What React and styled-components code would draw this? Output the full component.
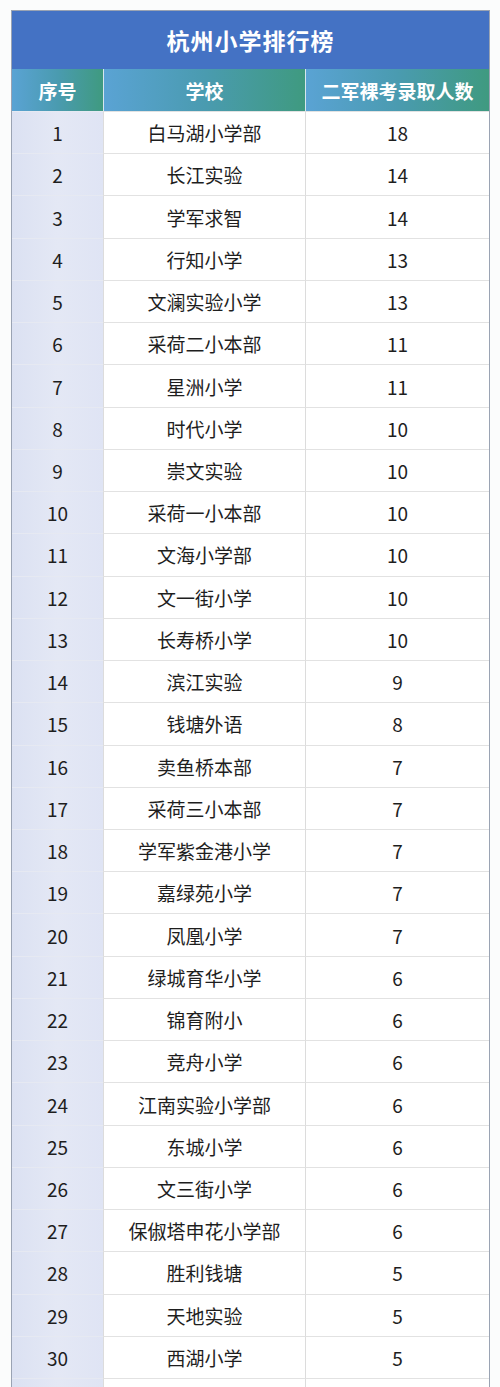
import React from 'react'
import styled, { createGlobalStyle } from 'styled-components'

const rows = [
  ['白马湖小学部', 18],
  ['长江实验', 14],
  ['学军求智', 14],
  ['行知小学', 13],
  ['文澜实验小学', 13],
  ['采荷二小本部', 11],
  ['星洲小学', 11],
  ['时代小学', 10],
  ['崇文实验', 10],
  ['采荷一小本部', 10],
  ['文海小学部', 10],
  ['文一街小学', 10],
  ['长寿桥小学', 10],
  ['滨江实验', 9],
  ['钱塘外语', 8],
  ['卖鱼桥本部', 7],
  ['采荷三小本部', 7],
  ['学军紫金港小学', 7],
  ['嘉绿苑小学', 7],
  ['凤凰小学', 7],
  ['绿城育华小学', 6],
  ['锦育附小', 6],
  ['竞舟小学', 6],
  ['江南实验小学部', 6],
  ['东城小学', 6],
  ['文三街小学', 6],
  ['保俶塔申花小学部', 6],
  ['胜利钱塘', 5],
  ['天地实验', 5],
  ['西湖小学', 5],
]

const GlobalStyle = createGlobalStyle`
  html, body {
    margin: 0;
    padding: 0;
    background: #fbfcfc;
  }
  body {
    font-family: "Noto Sans CJK SC", "Noto Sans", sans-serif;
    color: #222;
  }
`

export default function App() {
  return (
    <Page>
      <GlobalStyle />
      <Table>
        <Title>杭州小学排行榜</Title>
        <Grid>
          <HeadCell>序号</HeadCell>
          <HeadCell>学校</HeadCell>
          <HeadCell>二军裸考录取人数</HeadCell>
          {rows.map(([name, count], i) => (
            <React.Fragment key={name}>
              <IndexCell>{i + 1}</IndexCell>
              <Cell>{name}</Cell>
              <Cell>{count}</Cell>
            </React.Fragment>
          ))}
          <IndexCell />
          <Cell />
          <Cell />
        </Grid>
      </Table>
    </Page>
  )
}

const Page = styled.div`
  width: 500px;
  height: 1387px;
  overflow: hidden;
  padding: 10px 10px 0 11px;
  box-sizing: border-box;
`

const Table = styled.div`
  border: 1px solid #9aa3b3;
  border-bottom: 0;
  background: #fff;
`

const Title = styled.div`
  height: 58px;
  background: #4472c4;
  color: #fff;
  font-size: 23px;
  font-weight: 700;
  display: flex;
  align-items: center;
  justify-content: center;
  letter-spacing: 1px;
`

const Grid = styled.div`
  display: grid;
  grid-template-columns: 91px 202px 1fr;
  grid-template-rows: 42px;
  grid-auto-rows: 42.24px;
`

const HeadCell = styled.div`
  background: linear-gradient(90deg, #5aa3d4 0%, #4a9bb0 50%, #3f9a80 100%);
  color: #fff;
  font-size: 19px;
  font-weight: 700;
  display: flex;
  align-items: center;
  justify-content: center;
  border-left: 1px solid #d7e6ee;
  &:first-child {
    border-left: 0;
  }
`

const Cell = styled.div`
  display: flex;
  align-items: center;
  justify-content: center;
  font-size: 19px;
  color: #1e1e1e;
  border-left: 1px solid #dcdcdc;
  border-top: 1px solid #e2e2e2;
  box-sizing: border-box;
`

const IndexCell = styled(Cell)`
  background: linear-gradient(90deg, #dbe1f2 0%, #e4e8f5 50%, #dfe4f4 100%);
  border-left: 0;
  border-top: 1px solid #e6e9f2;
`
